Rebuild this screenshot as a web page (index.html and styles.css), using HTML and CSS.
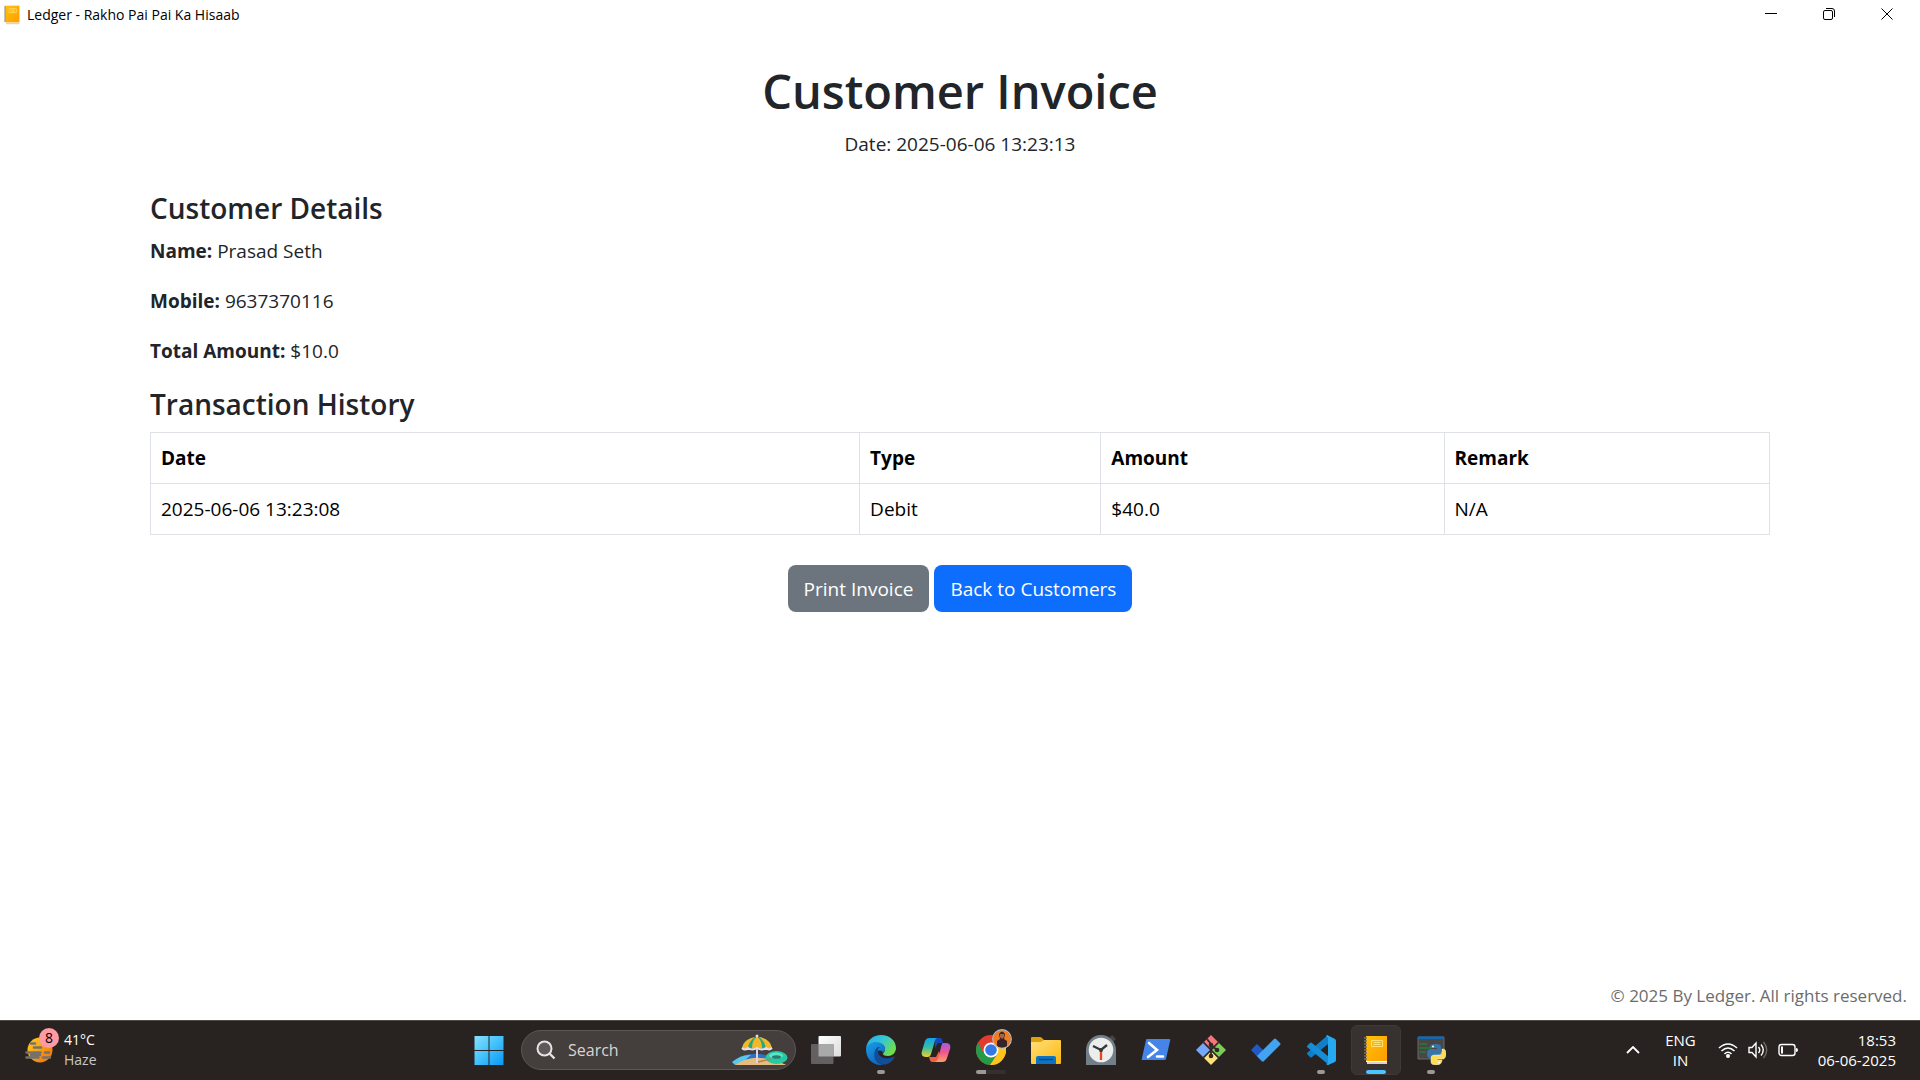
FILE: index.html
```html
<!DOCTYPE html>
<html lang="en">
<head>
<meta charset="utf-8">
<meta name="viewport" content="width=device-width, initial-scale=1">
<title>Ledger - Rakho Pai Pai Ka Hisaab</title>
<link rel="stylesheet" href="styles.css">
</head>
<body>
<svg class="defs" width="0" height="0" aria-hidden="true">
  <defs>
    <linearGradient id="gold" x1="0" y1="0" x2="1" y2="1"><stop offset="0" stop-color="#ffc20a"/><stop offset="1" stop-color="#ff9d00"/></linearGradient>
    <symbol id="notebook" viewBox="0 0 30 30">
      <path d="M5 2h21v27H6z" fill="#d9d5cc"/>
      <path d="M5 26h21v1H5z" fill="#fff"/>
      <path d="M5 1h21v25H5z" fill="url(#gold)"/>
      <path d="M10.500 5.500h11v6h-11zM12.500 7.500h7M12.500 9.500h7" fill="none" stroke="#ffe27a"/>
      <path d="M3 3h3M3 6h3M3 9h3M3 12h3M3 15h3M3 18h3M3 21h3M3 24h3" stroke="#77736b" stroke-width="1.300"/>
    </symbol>
  </defs>
</svg>

<header class="titlebar">
  <svg class="titlebar-icon" aria-hidden="true"><use href="#notebook"/></svg>
  <span class="titlebar-name">Ledger - Rakho Pai Pai Ka Hisaab</span>
  <div class="window-controls">
    <button type="button" aria-label="Minimize"><svg viewBox="0 0 14 14"><path d="M1 6.500h12"/></svg></button>
    <button type="button" aria-label="Restore"><svg viewBox="0 0 14 14"><rect x="1.500" y="3.500" width="9" height="9" rx="1.500"/><path d="M4 1.500h6a2.500 2.500 0 0 1 2.500 2.500v6"/></svg></button>
    <button type="button" aria-label="Close"><svg viewBox="0 0 14 14"><path d="M1.500 1.500l11 11M12.500 1.500l-11 11"/></svg></button>
  </div>
</header>

<main class="invoice">
  <div class="invoice-head">
    <h1>Customer Invoice</h1>
    <p>Date: 2025-06-06 13:23:13</p>
  </div>
  <section class="details">
    <h2>Customer Details</h2>
    <p><strong>Name:</strong> Prasad Seth</p>
    <p><strong>Mobile:</strong> 9637370116</p>
    <p><strong>Total Amount:</strong> $10.0</p>
  </section>
  <section class="history">
    <h2>Transaction History</h2>
    <table>
      <colgroup><col class="col-date"><col class="col-type"><col class="col-amount"><col></colgroup>
      <thead><tr><th scope="col">Date</th><th scope="col">Type</th><th scope="col">Amount</th><th scope="col">Remark</th></tr></thead>
      <tbody><tr><td>2025-06-06 13:23:08</td><td>Debit</td><td>$40.0</td><td>N/A</td></tr></tbody>
    </table>
  </section>
  <div class="actions">
    <button type="button" class="btn btn-secondary">Print Invoice</button>
    <a href="#" class="btn btn-primary">Back to Customers</a>
  </div>
</main>

<footer class="copyright">© 2025 By Ledger. All rights reserved.</footer>

<nav class="taskbar" aria-label="Taskbar">
  <button type="button" class="weather">
    <span class="weather-icon">
      <svg viewBox="0 0 28 26" aria-hidden="true">
        <defs><linearGradient id="sun" x1="0" y1="0" x2="1" y2="1"><stop offset="0" stop-color="#ffd21f"/><stop offset="1" stop-color="#f06a0c"/></linearGradient></defs>
        <circle cx="15" cy="13" r="12.500" fill="url(#sun)"/>
        <path d="M6 6.500h4M9 10.500h7M1.500 15.500h14M20 15.500h4M6 18h9M1.500 20.500h12M18 20.500h7" stroke="#77716b" stroke-width="2.600" stroke-linecap="round"/>
      </svg>
      <span class="badge">8</span>
    </span>
    <span class="stack weather-text"><span>41°C</span><span class="muted">Haze</span></span>
  </button>

  <div class="apps">
    <button type="button" class="app" aria-label="Start">
      <svg viewBox="0 0 30 30"><defs><linearGradient id="win" gradientUnits="userSpaceOnUse" x1="0" y1="0" x2="30" y2="30"><stop offset="0" stop-color="#8be3ff"/><stop offset=".5" stop-color="#43c1fb"/><stop offset="1" stop-color="#0996f5"/></linearGradient></defs><path d="M0.500 1h14v14h-14zM15.500 1h14v14h-14zM0.500 16h14v14h-14zM15.500 16h14v14h-14z" fill="url(#win)"/></svg>
    </button>
    <button type="button" class="search">
      <svg class="search-glass" viewBox="0 0 20 20" aria-hidden="true"><circle cx="8.500" cy="8.500" r="7" fill="#5f5a59" stroke="#e6e4e3" stroke-width="2"/><path d="M13.500 13.500l5 5" stroke="#e6e4e3" stroke-width="2.400"/></svg>
      <span>Search</span>
      <svg class="search-art" viewBox="0 0 56 32" aria-hidden="true">
        <path d="M0 28Q12 18 28 20T46 30H4z" fill="#2f6fc4"/><path d="M0 28Q10 20 19 21L12 27 3 31z" fill="#58c9ee"/>
        <path d="M3 31Q18 21 35 25T54 31z" fill="#e7bd7e"/>
        <path d="M25 3v26" stroke="#dcd6e4" stroke-width="2"/>
        <path d="M10 14Q12 4 25 3 38 4 40 14 37 17 34 14 30 17 25 14 20 17 16 14 13 17 10 14z" fill="#2ca77c"/>
        <path d="M10 14Q12 5 23 3 17 7 16 14 13 16 10 14zM20 14Q20 6 25 3 30 6 30 14 25 17 20 14zM40 14Q38 5 27 3 33 7 34 14 37 16 40 14z" fill="#f4b727"/>
        <path d="M10 14q3 3 6 0 4 3 9 0 5 3 9 0 3 3 6 0" fill="none" stroke="#e7dcf1" stroke-width="2"/>
        <circle cx="25" cy="2" r="1.500" fill="#e8d9dc"/>
        <ellipse cx="44.500" cy="23.500" rx="11" ry="6.500" fill="#25c9a4"/><ellipse cx="44" cy="21.500" rx="7" ry="3" fill="#59e5c7"/><ellipse cx="44.500" cy="23" rx="4.500" ry="1.800" fill="#277d70"/>
        <path d="M26 28l13-3" stroke="#b98152" stroke-width="1.500"/>
      </svg>
    </button>
    <button type="button" class="app" aria-label="Task view">
      <svg viewBox="0 0 30 30"><defs><linearGradient id="tv" x1="0" y1="0" x2="1" y2="1"><stop offset="0" stop-color="#fff"/><stop offset="1" stop-color="#dcdcdc"/></linearGradient></defs><rect x="7.500" y="1" width="22.500" height="20.500" rx="1" fill="url(#tv)"/><rect x="0" y="9" width="22.500" height="20" rx="1" fill="#626060"/><path d="M7.500 9h15v12.500h-15z" fill="#aaa9a9"/></svg>
    </button>
    <button type="button" class="app running" aria-label="Edge">
      <svg viewBox="0 0 30 30"><defs><linearGradient id="e1" x1="0" y1="0" x2="1" y2=".6"><stop offset="0" stop-color="#22a8ec"/><stop offset=".5" stop-color="#35c5d8"/><stop offset="1" stop-color="#70df4a"/></linearGradient><linearGradient id="e2" x1="0" y1="0" x2=".6" y2="1"><stop offset="0" stop-color="#1ba0e4"/><stop offset="1" stop-color="#0b62c4"/></linearGradient></defs>
        <path d="M0 14C1 5 7 0 15 0c9 0 15 6 15 13 0 5-4 8-8 8-3 0-5-1-5-2 0-1 2-2 2-5 0-4-4-6-8-6-6 0-10 3-11 6z" fill="url(#e1)"/>
        <path d="M0 14C1 9 6 7 10 7c5 0 9 3 9 7 0 1-1 3-2 4-1-3-4-3-6-1-5 4-1 11 6 13C7 31 0 24 0 14z" fill="url(#e2)"/>
        <path d="M12 12c-5 3-5 11 0 15 5 5 13 2 16-4 1-1 0-2-1-1-6 3-15 1-15-6 0-1 0-3 2-4z" fill="#124d97"/></svg>
    </button>
    <button type="button" class="app" aria-label="Copilot">
      <svg viewBox="0 0 30 30"><defs><linearGradient id="c1" x1="0" y1="0" x2="0" y2="1"><stop offset="0" stop-color="#11a3ee"/><stop offset=".5" stop-color="#36bfa0"/><stop offset="1" stop-color="#f2cf2f"/></linearGradient><linearGradient id="c2" x1="0" y1="0" x2="0" y2="1"><stop offset="0" stop-color="#a05be8"/><stop offset=".5" stop-color="#f0568f"/><stop offset="1" stop-color="#ffa264"/></linearGradient></defs>
        <path d="M14 3h4c3 0 3 1 4 5h-5l-3 5z" fill="#1745bd"/><path d="M8 22h7l3-6 2 7c-1 3-3 4-5 4h-3c-3 0-3-2-4-5z" fill="#ed6047"/>
        <path d="M8 3h9c-3 0-3 3-4 6l-3 10c-1 3-2 3-5 3-4 0-5-3-4-6L4 6c1-2 2-3 4-3z" fill="url(#c1)"/>
        <path d="M22 8h3c4 0 5 3 4 6l-3 9c-1 3-2 4-5 4h-8c3 0 4-3 5-6l2-9c1-3 1-4 2-4z" fill="url(#c2)"/></svg>
    </button>
    <button type="button" class="app running grouped" aria-label="Chrome">
      <svg viewBox="0 0 30 30"><circle cx="15" cy="15" r="15" fill="#e33b2e"/><path d="M2 7.500A15 15 0 0 0 14 30l8-11-14 0z" fill="#249b48"/><path d="M28 7.500A15 15 0 0 1 14 30l8-12-3-10.500z" fill="#fbc51d"/><circle cx="15" cy="15" r="7.500" fill="#fff"/><circle cx="15" cy="15" r="5.800" fill="#3578e5"/></svg>
      <svg class="profile" viewBox="0 0 20 20"><circle cx="10" cy="10" r="9" fill="#ef7c21"/><path d="M5 17V12l3-2-1-5q3-5 6 0l-1 5 3 2v5q-5 4-10 0z" fill="#36242a"/><path d="M8 5h4v3l-2 2-2-2z" fill="#a56747"/><circle cx="10" cy="10" r="9.300" fill="none" stroke="#c1bcba" stroke-width="1.200"/></svg>
    </button>
    <button type="button" class="app" aria-label="File Explorer">
      <svg viewBox="0 0 30 30"><defs><linearGradient id="f" x1="0" y1="0" x2="1" y2="1"><stop offset="0" stop-color="#ffe07a"/><stop offset="1" stop-color="#fdb80e"/></linearGradient></defs><path d="M0 3q0-1 1-1h8q1 0 2 1l2 2h16v8H0z" fill="#dfa00a"/><path d="M0 7h10l3-2h16q1 0 1 1v22q0 1-1 1H1q-1 0-1-1z" fill="url(#f)"/><path d="M5 29v-6q0-2 2-2h16q2 0 2 2v6z" fill="#0d73c4"/><path d="M8 24.500h14" stroke="#054b89" stroke-width="1.500"/></svg>
    </button>
    <button type="button" class="app" aria-label="Clock">
      <svg viewBox="0 0 30 30"><path d="M23 3l3-3 4 4-3 3z" fill="#494441"/><path d="M0 15a15 15 0 0 1 30 0v15H0z" fill="#727f89"/><circle cx="15" cy="15" r="12.300" fill="#eceded"/><path d="M7 11l8 4 6-5" fill="none" stroke="#35383a" stroke-width="2.300"/><path d="M15 16v9" stroke="#dc4b1f" stroke-width="2.300"/><circle cx="15" cy="15" r="2" fill="#35383a"/></svg>
    </button>
    <button type="button" class="app" aria-label="PowerShell">
      <svg viewBox="0 0 30 30"><path d="M6 4h22q2 0 1 2l-4 18q0 1-2 1H2q-2 0-1-2L5 5q0-1 1-1z" fill="#4685e8"/><path d="M8 8l8 7-9 7M16 21.500h6" fill="none" stroke="#fff" stroke-width="2.600" stroke-linecap="round"/></svg>
    </button>
    <button type="button" class="app" aria-label="Git">
      <svg viewBox="0 0 30 30"><path d="M15 0l7 7-7 7-7-7z" fill="#f3777a"/><path d="M7.500 7.500l7 7.500-7 7.500L0 15z" fill="#75a8fa"/><path d="M15 16l7 7-7 7-7-7z" fill="#ffe17c"/><path d="M22.500 7.500L30 15l-7.500 7.500L15.500 15z" fill="#7bce55"/><path d="M7.500 7.500l15 15M22.500 7.500l-15 15" stroke="#302726" stroke-width="1.500"/><path d="M11 4l4 5v12M15 10l6 5" stroke="#302726" stroke-width="1.800" fill="none"/><circle cx="15" cy="10" r="2.300" fill="#302726"/><circle cx="21" cy="15" r="2.300" fill="#302726"/><circle cx="15" cy="21" r="2.300" fill="#302726"/></svg>
    </button>
    <button type="button" class="app" aria-label="To Do">
      <svg viewBox="0 0 30 30"><path d="M0 15l6-6 10 10-5 8z" fill="#205ac6"/><path d="M6 21L23 4q1-1 2 0l4 4q1 1 0 2L13 26q-1 1-2 0z" fill="#42a4f0"/></svg>
    </button>
    <button type="button" class="app running" aria-label="Visual Studio Code">
      <svg viewBox="0 0 30 30"><path d="M1 19l3 3q1 1 2 0L22 9V0L1 18z" fill="#117fc7"/><path d="M1 11l3-3q1-1 2 0l17 14v8L1 12z" fill="#168dd6"/><path d="M21 0l8 4q1 1 1 2v19q0 1-1 2l-7 3q-1 0-2-1l2-1V3l-2-2z" fill="#27a9f2"/></svg>
    </button>
    <button type="button" class="app running active" aria-label="Ledger"><svg><use href="#notebook"/></svg></button>
    <button type="button" class="app running" aria-label="Python">
      <svg viewBox="0 0 30 30"><path d="M2 2h26v22H2z" fill="#474746" stroke="#767675" stroke-width=".8"/><path d="M2 1.500h26v2.500H2z" fill="#1169b5"/><path d="M4 9h7M4 13h12M4 17h6" stroke="#277c35" stroke-width="1.300"/>
        <path d="M14 12q0-3 6-3t5 4v5q0 2-3 2h-4q-3 0-3 3h-1q-3 0-3-4 0-5 4-5h6v-1h-7z" fill="#3974a7"/><path d="M26 14h1q3 0 3 5t-4 5h-5v1h5q0 5-6 5-5 0-5-3v-4q0-3 3-3h5q3 0 3-4z" fill="#ffdc55" stroke="#eee" stroke-width=".5"/><circle cx="17" cy="11.500" r="1" fill="#fff"/><circle cx="23" cy="27.500" r="1" fill="#fff"/></svg>
    </button>
  </div>

  <div class="tray">
    <button type="button" class="chevron" aria-label="Show hidden icons"><svg viewBox="0 0 14 8"><path d="M1 7l6-6 6 6" fill="none" stroke="#fff" stroke-width="1.800"/></svg></button>
    <button type="button" class="stack language"><span>ENG</span><span>IN</span></button>
    <button type="button" class="status" aria-label="Network, volume and battery">
      <svg viewBox="0 0 20 20"><g fill="none" stroke="#fff" stroke-width="1.600"><path d="M1 8q9-8 18 0"/><path d="M3.500 11q6.500-6 13 0"/><path d="M6.500 14q3.500-3.500 7 0"/></g><circle cx="10" cy="16" r="2" fill="#fff"/></svg>
      <svg viewBox="0 0 20 20"><g fill="none" stroke="#fff" stroke-width="1.400"><path d="M1 7.500h3l4-4.500v14l-4-4.500H1z"/><path d="M10.500 7q2.500 3 0 6M13 4.500q4.500 5.500 0 11"/><path d="M15.500 2q6.500 8 0 16" stroke="#6e6967"/></g></svg>
      <svg viewBox="0 0 20 20"><rect x="1" y="4.500" width="16" height="11" rx="2.500" fill="none" stroke="#fff" stroke-width="1.400"/><path d="M3 6.500h2v7H3z" fill="#fff"/><path d="M18 8q2 0 2 2t-2 2z" fill="#fff"/></svg>
    </button>
    <button type="button" class="stack clock"><span>18:53</span><span>06-06-2025</span></button>
  </div>
</nav>
</body>
</html>
```
FILE: styles.css
```css
* {
  box-sizing: border-box;
}

body {
  margin: 0;
  min-height: 100vh;
  display: flex;
  flex-direction: column;
  background: #fff;
  color: #212529;
  font: 19px/30px "Open Sans", "Noto Sans", sans-serif;
}

h1, h2, p {
  margin: 0;
}

button {
  margin: 0;
  padding: 0;
  border: 0;
  background: none;
  color: inherit;
  font: inherit;
}

svg {
  display: block;
}

.defs {
  position: absolute;
}

/* Window title bar */
.titlebar {
  display: flex;
  align-items: center;
  height: 30px;
  padding: 0 4px 0 2px;
  color: #000;
  font-size: 14px;
}

.titlebar-icon {
  width: 20px;
  height: 20px;
  margin-right: 5px;
}

.window-controls {
  display: flex;
  margin-left: auto;
}

.window-controls button {
  display: grid;
  place-items: center;
  width: 58px;
  height: 30px;
  padding-bottom: 2px;
}

.window-controls svg {
  width: 14px;
  height: 14px;
  fill: none;
  stroke: #000;
}

/* Invoice */
.invoice {
  flex: 1;
  width: 100%;
  max-width: 1650px;
  margin: 0 auto;
  padding: 31px 15px;
}

.invoice-head {
  margin-bottom: 31px;
  text-align: center;
}

h1 {
  margin-bottom: 8px;
  font-size: 47px;
  font-weight: 600;
  line-height: 60px;
}

h2 {
  margin-bottom: 10px;
  font-size: 28px;
  font-weight: 600;
  line-height: 36px;
}

.details p {
  margin-bottom: 20px;
}

table {
  width: 100%;
  border-collapse: collapse;
  table-layout: fixed;
  color: #000;
}

.col-date {
  width: 43.8%;
}

.col-type {
  width: 14.9%;
}

.col-amount {
  width: 21.2%;
}

th, td {
  padding: 10px;
  border: 1px solid #dee2e6;
  text-align: left;
}

.actions {
  display: flex;
  justify-content: center;
  gap: 5px;
  margin-top: 30px;
}

.btn {
  padding: 9px 16px 8px;
  border-radius: 8px;
  color: #fff;
  text-decoration: none;
}

.btn-secondary {
  background: #6c757d;
}

.btn-primary {
  background: #0d6efd;
}

.copyright {
  padding: 0 13px 9px;
  color: #6c6c6c;
  font-size: 17px;
  text-align: right;
}

/* Taskbar */
.taskbar {
  display: grid;
  grid-template-columns: 1fr auto 1fr;
  align-items: center;
  height: 60px;
  padding-bottom: 1px;
  border-top: 1px solid #4d4a48;
  background: #282321;
  color: #fff;
  font-size: 15px;
  line-height: 20px;
}

.stack {
  display: flex;
  flex-direction: column;
}

.weather {
  display: flex;
  align-items: center;
  gap: 11px;
  margin-left: 25px;
  font-size: 14px;
  text-align: left;
}

.weather-icon {
  position: relative;
}

.weather-icon svg {
  width: 28px;
  height: 26px;
}

.badge {
  position: absolute;
  top: -9px;
  right: -6px;
  width: 20px;
  height: 20px;
  border-radius: 50%;
  background: #ff99a4;
  color: #000;
  text-align: center;
}

.muted {
  color: #c9c6c5;
}

.apps {
  display: flex;
  align-items: center;
  gap: 5px;
}

.app {
  position: relative;
  display: grid;
  place-items: center;
  width: 50px;
  height: 50px;
  border-radius: 6px;
}

.app svg {
  width: 30px;
  height: 30px;
}

.active {
  border: 1px solid #3f3a38;
  background: #373230;
}

.running::after {
  content: "";
  position: absolute;
  bottom: 1px;
  left: 50%;
  width: 8px;
  height: 4px;
  margin-left: -4px;
  border-radius: 2px;
  background: #9b9896;
}

.active::after {
  bottom: 0;
  width: 20px;
  margin-left: -10px;
  background: #4cc2ff;
}

.grouped::after {
  width: 30px;
  margin-left: -15px;
  background: linear-gradient(to right, #9b9896 10px, #35302e 10px);
}

.app .profile {
  position: absolute;
  top: 4px;
  right: 4px;
  width: 20px;
  height: 20px;
}

.search {
  display: flex;
  align-items: center;
  gap: 12px;
  width: 275px;
  height: 40px;
  margin-left: 2px;
  padding: 0 7px 0 14px;
  border: 1px solid #5d5755;
  border-radius: 20px;
  background: #443e3c;
  color: #d8d5d4;
  font-size: 16px;
}

.search-glass {
  width: 20px;
  height: 20px;
}

.search-art {
  width: 56px;
  height: 32px;
  margin-left: auto;
}

.tray {
  display: flex;
  align-items: center;
  justify-content: flex-end;
  padding-right: 24px;
}

.chevron {
  margin-right: 25px;
}

.chevron svg {
  width: 14px;
  height: 8px;
}

.language {
  align-items: center;
  margin-right: 22px;
}

.status {
  display: flex;
  gap: 10px;
  margin-right: 20px;
}

.status svg {
  width: 20px;
  height: 20px;
}

.clock {
  align-items: flex-end;
}
```
